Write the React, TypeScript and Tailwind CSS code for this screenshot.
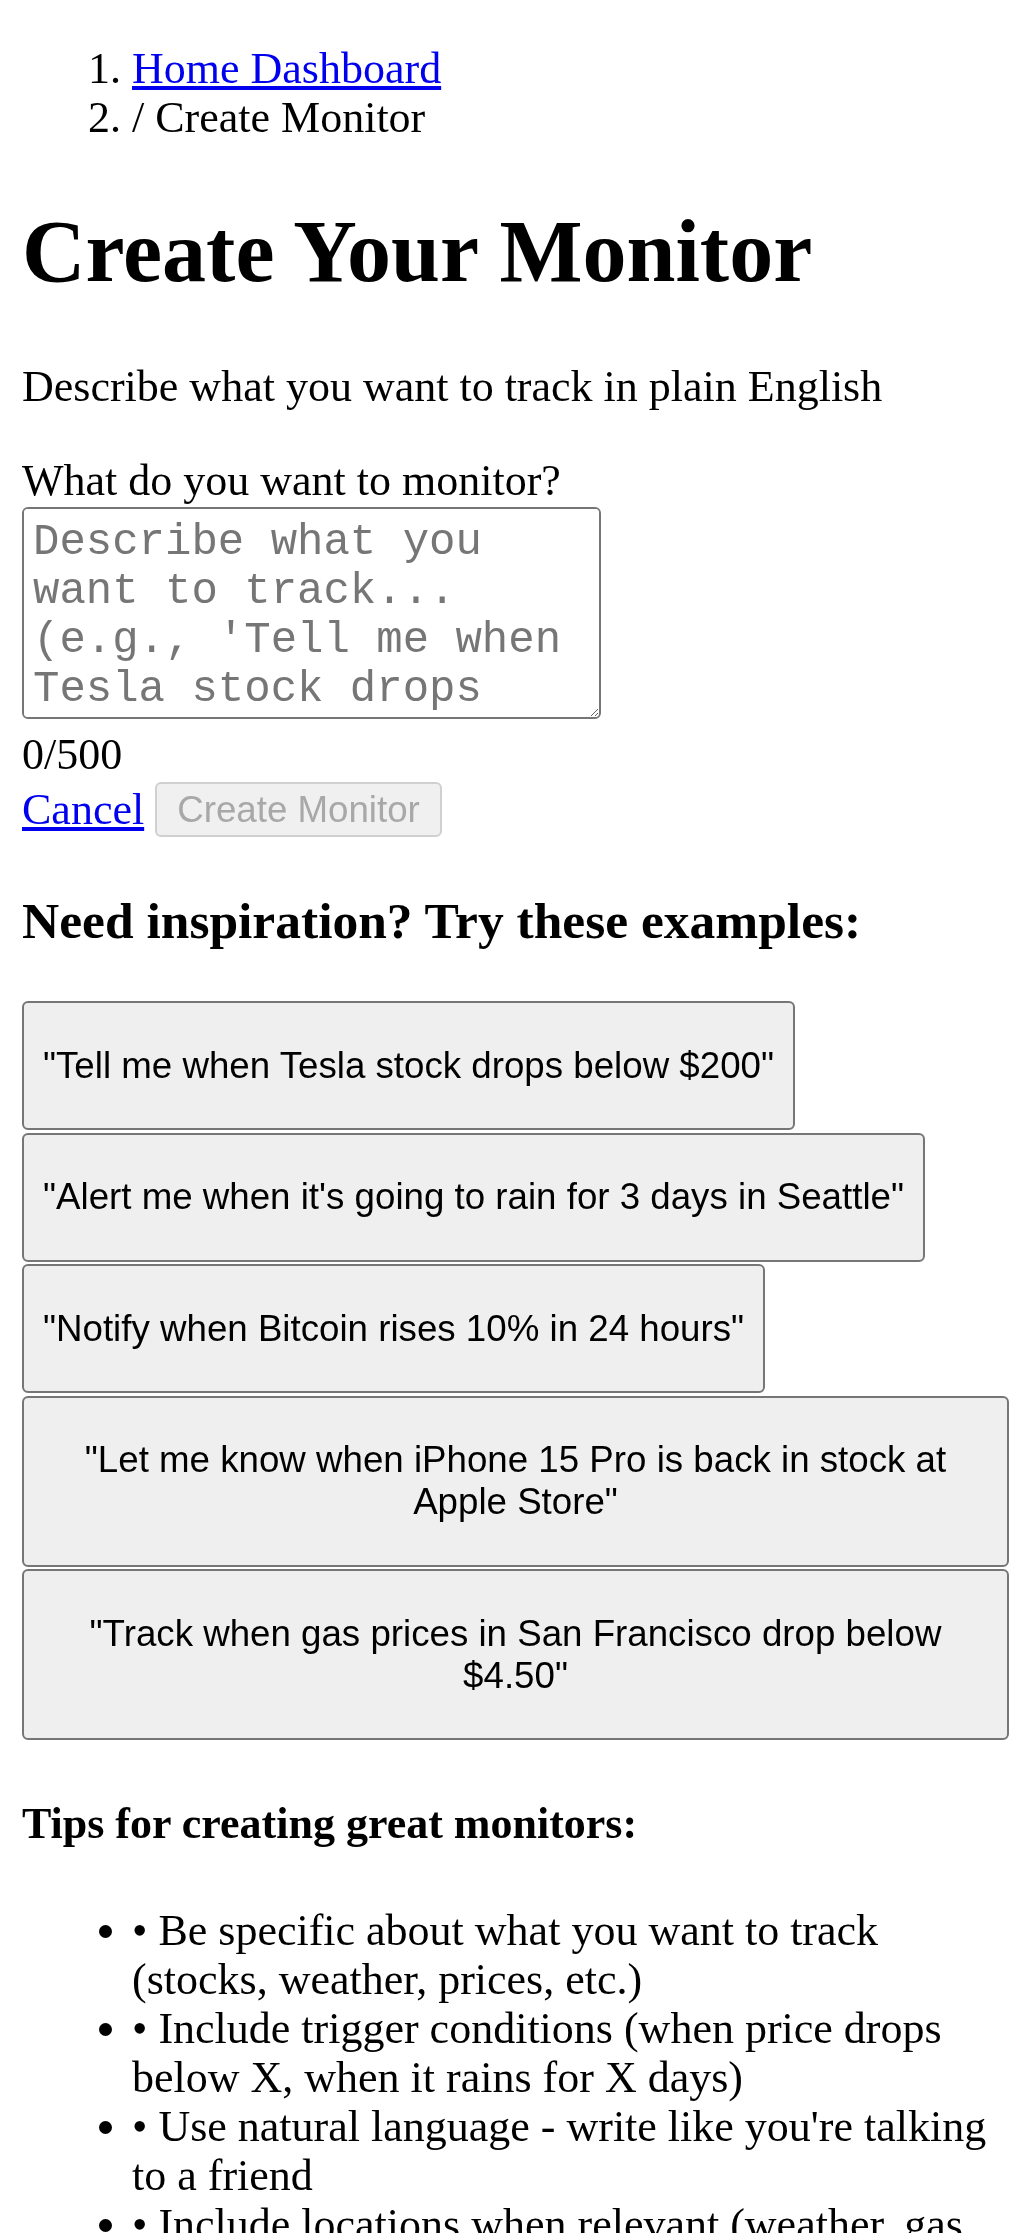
export default function App() {
  const examples = [
    '"Tell me when Tesla stock drops below $200"',
    '"Alert me when it\'s going to rain for 3 days in Seattle"',
    '"Notify when Bitcoin rises 10% in 24 hours"',
    '"Let me know when iPhone 15 Pro is back in stock at Apple Store"',
    '"Track when gas prices in San Francisco drop below $4.50"',
  ];
  const tips = [
    "• Be specific about what you want to track (stocks, weather, prices, etc.)",
    "• Include trigger conditions (when price drops below X, when it rains for X days)",
    "• Use natural language - write like you're talking to a friend",
    "• Include locations when relevant (weather, gas prices, local events)",
  ];
  return (
    <div className="min-h-[2233px] bg-white px-[22px] pt-[44px] pb-[44px] font-['Liberation_Serif',serif] text-[44px] leading-[49px] text-black">
      <nav>
        <ol className="list-decimal pl-[110px]">
          <li>
            <a href="#" className="text-[#0000ee] underline">
              Home Dashboard
            </a>
          </li>
          <li>/ Create Monitor</li>
        </ol>
      </nav>

      <h1 className="mt-[61px] text-[88px] font-bold leading-[98px]">Create Your Monitor</h1>
      <p className="mt-[61px]">Describe what you want to track in plain English</p>

      <div className="mt-[45px]">
        <label htmlFor="monitor" className="block">
          What do you want to monitor?
        </label>
        <textarea
          id="monitor"
          className="mt-[2px] block h-[212px] w-[579px] rounded-[6px] border-2 border-[#767676] bg-white px-[9px] pt-[9px] pb-0 font-['Liberation_Mono',monospace] text-[44px] leading-[49px] text-black placeholder:text-[#767676]"
          placeholder="Describe what you want to track... (e.g., 'Tell me when Tesla stock drops below $200')"
        />
        <div className="mt-[11px]">0/500</div>
        <div className="mt-[3px] flex items-center gap-[11px]">
          <a href="#" className="text-[#0000ee] underline">
            Cancel
          </a>
          <button
            disabled
            className="h-[55px] rounded-[6px] border-2 border-[#d0d0d0] bg-[#f0f0f0] px-[20px] font-['Liberation_Sans',Arial,sans-serif] text-[36.7px] leading-[42px] text-[#a8a8a8]"
          >
            Create Monitor
          </button>
        </div>
      </div>

      <h2 className="mt-[55px] text-[51.5px] font-bold leading-[57px]">Need inspiration? Try these examples:</h2>

      <div className="mt-[52px] flex flex-col items-start gap-[2.5px]">
        {examples.map((e) => (
          <button
            key={e}
            className="max-w-full rounded-[6px] border-2 border-[#767676] bg-[#efefef] px-[19px] py-[41.5px] text-center font-['Liberation_Sans',Arial,sans-serif] text-[36.7px] leading-[42px] text-black"
          >
            {e}
          </button>
        ))}
      </div>

      <h3 className="mt-[59px] text-[44px] font-bold leading-[49px]">Tips for creating great monitors:</h3>
      <ul className="mt-[58px] list-disc pl-[110px]">
        {tips.map((t) => (
          <li key={t}>{t}</li>
        ))}
      </ul>
    </div>
  );
}
